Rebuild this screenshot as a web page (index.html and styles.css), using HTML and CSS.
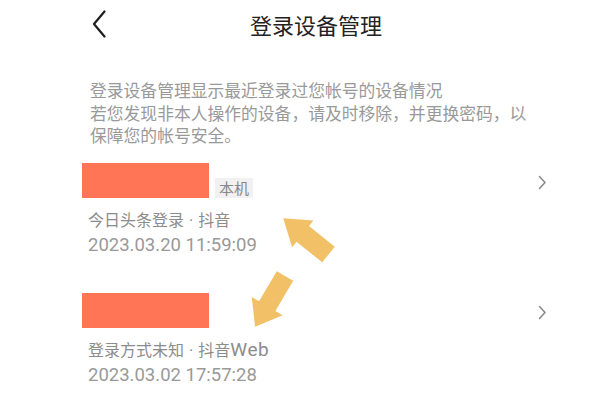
FILE: index.html
```html
<!DOCTYPE html>
<html lang="zh-CN">
<head>
<meta charset="utf-8">
<title>登录设备管理</title>
<link rel="stylesheet" href="styles.css">
</head>
<body>
<div class="page">
  <header class="nav">
    <svg class="back" width="14" height="28" viewBox="0 0 14 28" aria-hidden="true">
      <path d="M12.5 1.5 L2 14 L12.5 26.5" fill="none" stroke="#1e1e1e" stroke-width="2.2" stroke-linecap="round" stroke-linejoin="round"/>
    </svg>
    <h1 class="title">登录设备管理</h1>
  </header>

  <p class="intro">登录设备管理显示最近登录过您帐号的设备情况<br>若您发现非本人操作的设备，请及时移除，并更换密码，以<br>保障您的帐号安全。</p>

  <ul class="devices">
    <li class="device">
      <div class="device-head">
        <span class="device-name"></span>
        <span class="tag">本机</span>
        <svg class="chevron" width="9" height="15" viewBox="0 0 9 15" aria-hidden="true">
          <path d="M1.5 1.5 L7 7.5 L1.5 13.5" fill="none" stroke="#8a8a8a" stroke-width="1.6" stroke-linecap="round" stroke-linejoin="round"/>
        </svg>
      </div>
      <div class="device-source">今日头条登录<span class="sep">·</span>抖音</div>
      <div class="device-time">2023.03.20 11:59:09</div>
    </li>
    <li class="device">
      <div class="device-head">
        <span class="device-name"></span>
        <svg class="chevron" width="9" height="15" viewBox="0 0 9 15" aria-hidden="true">
          <path d="M1.5 1.5 L7 7.5 L1.5 13.5" fill="none" stroke="#8a8a8a" stroke-width="1.6" stroke-linecap="round" stroke-linejoin="round"/>
        </svg>
      </div>
      <div class="device-source">登录方式未知<span class="sep">·</span>抖音<span class="latin">Web</span></div>
      <div class="device-time">2023.03.02 17:57:28</div>
    </li>
  </ul>

  <!-- pointer arrows drawn over the list -->
  <svg class="pointers" width="607" height="404" viewBox="0 0 607 404" aria-hidden="true">
    <polygon points="0,-10 33,-10 33,-17 58,0 33,17 33,10 0,10" fill="#f2c167" transform="translate(328.5 254.5) rotate(218.7)"/>
    <polygon points="0,-9.5 35,-9.5 35,-18 59,0 35,18 35,9.5 0,9.5" fill="#f2c167" transform="translate(285 276) rotate(120.5)"/>
  </svg>
</div>
</body>
</html>
```

FILE: styles.css
```css
* {
  box-sizing: border-box;
}

html, body {
  margin: 0;
  padding: 0;
  background: #ffffff;
}

body {
  font-family: Roboto, "Noto Sans CJK SC", "Noto Sans", sans-serif;
  color: #222;
}

.page {
  position: relative;
  width: 607px;
  height: 404px;
  overflow: hidden;
}

.nav {
  display: flex;
  align-items: center;
  height: 48px;
  padding-left: 92px;
}

.back {
  display: block;
  flex: none;
  margin-top: -1px;
}

.title {
  margin: 0 0 0 144px;
  font-size: 22px;
  font-weight: 400;
  line-height: 30px;
  color: #222;
  font-family: "Noto Sans CJK SC", sans-serif;
}

.intro {
  margin: 31px 0 0;
  padding-left: 90px;
  font-family: "Noto Sans CJK SC", sans-serif;
  font-size: 16.8px;
  line-height: 22.5px;
  color: #999;
}

.devices {
  list-style: none;
  margin: 16px 0 0;
  padding: 0 60px 0 82px;
}

.device {
  display: flex;
  flex-direction: column;
  height: 130px;
}

.device-head {
  display: flex;
  align-items: flex-end;
  height: 35px;
}

.device-name {
  display: block;
  width: 127px;
  height: 35px;
  background: #ff7556;
}

.tag {
  margin-left: 6px;
  padding: 0 4px;
  height: 20px;
  line-height: 20px;
  font-family: "Noto Sans CJK SC", sans-serif;
  font-size: 15px;
  color: #888;
  background: #f1f1f1;
}

.chevron {
  display: block;
  margin-left: auto;
  align-self: center;
  margin-top: 4px;
}

.device-source {
  margin-top: 9px;
  padding-left: 6px;
  font-family: "Noto Sans CJK SC", sans-serif;
  font-size: 16px;
  line-height: 24px;
  color: #8c8c8c;
}

.sep {
  margin: 0 5px;
  font-family: Roboto, sans-serif;
}

.latin {
  font-family: Roboto, sans-serif;
  font-size: 19px;
  letter-spacing: 0.6px;
}

.device-time {
  padding-left: 6px;
  font-size: 18.5px;
  line-height: 24px;
  color: #999;
}

.pointers {
  position: absolute;
  left: 0;
  top: 0;
  pointer-events: none;
}
```
